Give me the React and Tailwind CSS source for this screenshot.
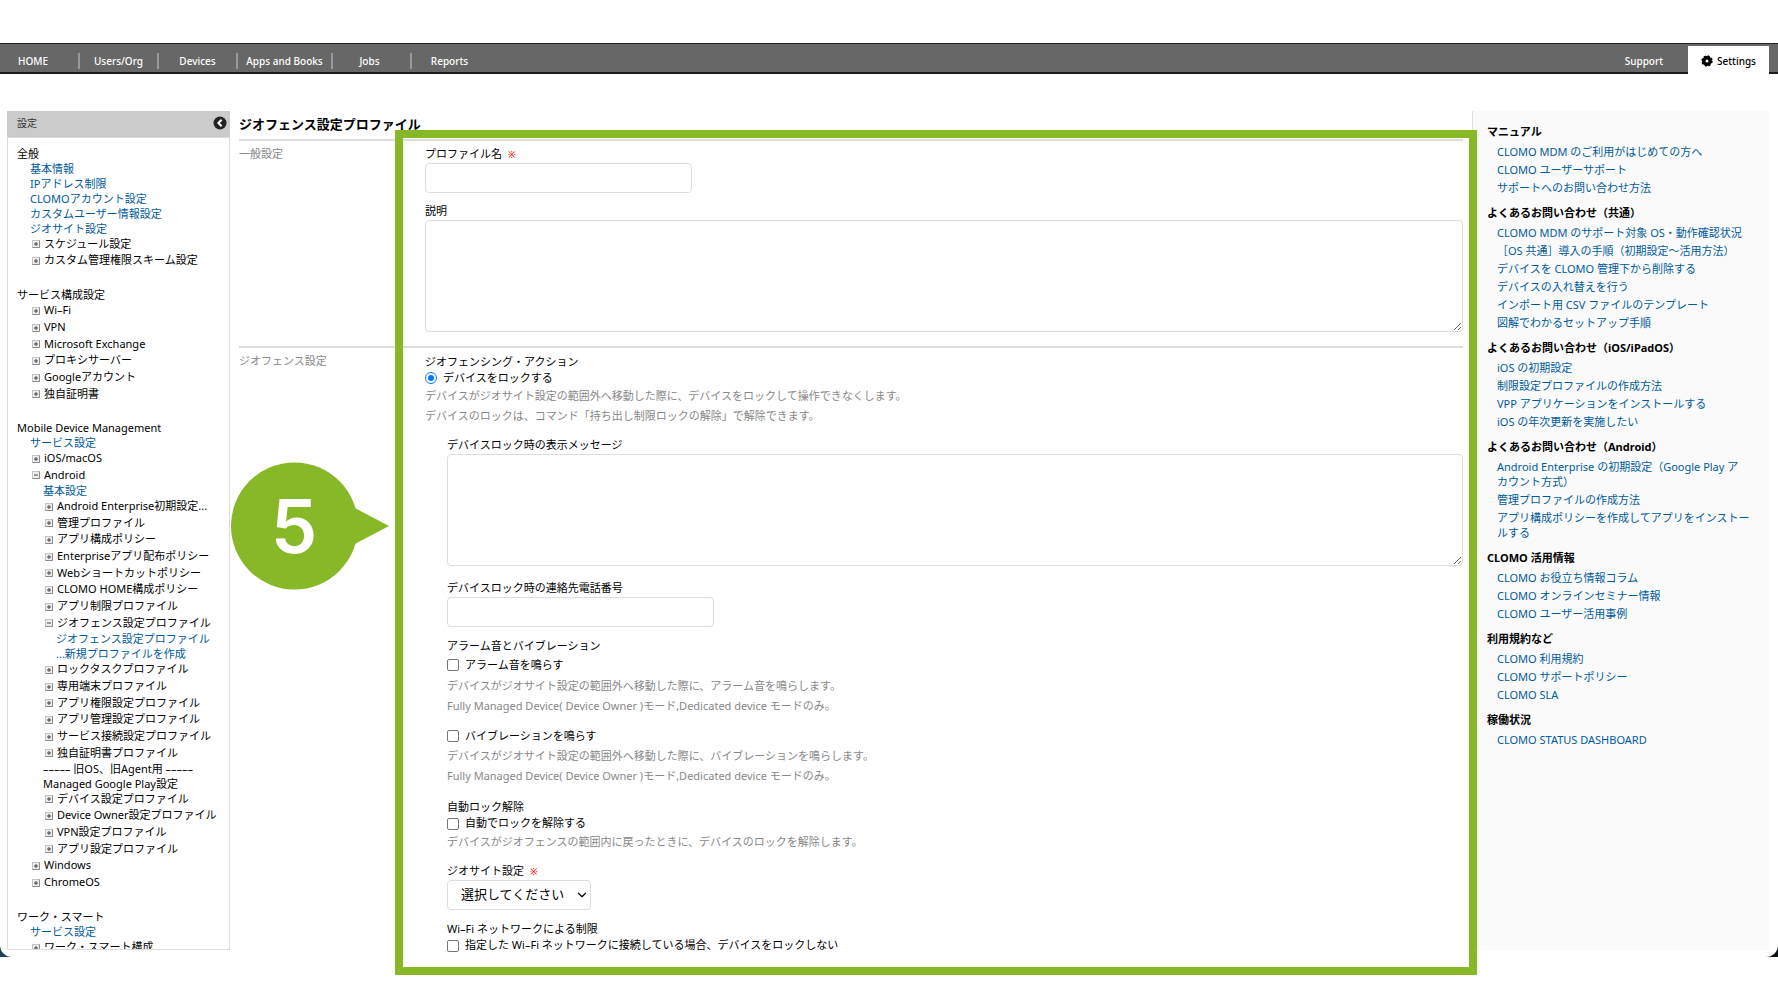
import React from "react";
import { ChevronDown } from "lucide-react";

const NAV_ITEMS = [
  { label: "HOME", className: "w-20 pr-3" },
  { label: "Users/Org", className: "w-[79px]" },
  { label: "Devices", className: "w-[79px]" },
  { label: "Apps and Books", className: "w-[95px]" },
  { label: "Jobs", className: "w-[79px] pr-1" },
  { label: "Reports", className: "w-[79px] pr-1" },
];

const SIDEBAR_GROUPS = [
  {
    title: "全般",
    items: [
      { link: "基本情報" },
      { link: "IPアドレス制限" },
      { link: "CLOMOアカウント設定" },
      { link: "カスタムユーザー情報設定" },
      { link: "ジオサイト設定" },
      { node: "スケジュール設定" },
      { node: "カスタム管理権限スキーム設定" },
    ],
  },
  {
    title: "サービス構成設定",
    items: [
      { node: "Wi–Fi" },
      { node: "VPN" },
      { node: "Microsoft Exchange" },
      { node: "プロキシサーバー" },
      { node: "Googleアカウント" },
      { node: "独自証明書" },
    ],
  },
  {
    title: "Mobile Device Management",
    items: [
      { link: "サービス設定" },
      { node: "iOS/macOS" },
      {
        node: "Android",
        children: [
          { link: "基本設定" },
          { node: "Android Enterprise初期設定..." },
          { node: "管理プロファイル" },
          { node: "アプリ構成ポリシー" },
          { node: "Enterpriseアプリ配布ポリシー" },
          { node: "Webショートカットポリシー" },
          { node: "CLOMO HOME構成ポリシー" },
          { node: "アプリ制限プロファイル" },
          {
            node: "ジオフェンス設定プロファイル",
            children: [{ link: "ジオフェンス設定プロファイル" }, { link: "...新規プロファイルを作成" }],
          },
          { node: "ロックタスクプロファイル" },
          { node: "専用端末プロファイル" },
          { node: "アプリ権限設定プロファイル" },
          { node: "アプリ管理設定プロファイル" },
          { node: "サービス接続設定プロファイル" },
          { node: "独自証明書プロファイル" },
          { text: "––––– 旧OS、旧Agent用 –––––" },
          { text: "Managed Google Play設定" },
          { node: "デバイス設定プロファイル" },
          { node: "Device Owner設定プロファイル" },
          { node: "VPN設定プロファイル" },
          { node: "アプリ設定プロファイル" },
        ],
      },
      { node: "Windows" },
      { node: "ChromeOS" },
    ],
  },
  {
    title: "ワーク・スマート",
    items: [{ link: "サービス設定" }, { node: "ワーク・スマート構成" }],
  },
];

const HELP_GROUPS = [
  {
    title: "マニュアル",
    links: ["CLOMO MDM のご利用がはじめての方へ", "CLOMO ユーザーサポート", "サポートへのお問い合わせ方法"],
  },
  {
    title: "よくあるお問い合わせ（共通）",
    links: [
      "CLOMO MDM のサポート対象 OS・動作確認状況",
      "［OS 共通］導入の手順（初期設定～活用方法）",
      "デバイスを CLOMO 管理下から削除する",
      "デバイスの入れ替えを行う",
      "インポート用 CSV ファイルのテンプレート",
      "図解でわかるセットアップ手順",
    ],
  },
  {
    title: "よくあるお問い合わせ（iOS/iPadOS）",
    links: [
      "iOS の初期設定",
      "制限設定プロファイルの作成方法",
      "VPP アプリケーションをインストールする",
      "iOS の年次更新を実施したい",
    ],
  },
  {
    title: "よくあるお問い合わせ（Android）",
    links: [
      "Android Enterprise の初期設定（Google Play ア\nカウント方式）",
      "管理プロファイルの作成方法",
      "アプリ構成ポリシーを作成してアプリをインストールする",
    ],
  },
  {
    title: "CLOMO 活用情報",
    links: ["CLOMO お役立ち情報コラム", "CLOMO オンラインセミナー情報", "CLOMO ユーザー活用事例"],
  },
  {
    title: "利用規約など",
    links: ["CLOMO 利用規約", "CLOMO サポートポリシー", "CLOMO SLA"],
  },
  { title: "稼働状況", links: ["CLOMO STATUS DASHBOARD"] },
];

function GearIcon() {
  return (
    <svg viewBox="0 0 12 12" className="size-3" aria-hidden="true">
      <circle cx="6" cy="6" r="3.2" fill="none" stroke="#000" strokeWidth="3.4" />
      <circle cx="6" cy="6" r="4.9" fill="none" stroke="#000" strokeWidth="1.6" strokeDasharray="2.1 1.748" />
    </svg>
  );
}

function TreeIcon({ open }) {
  return (
    <svg viewBox="0 0 8 8" className="size-2 shrink-0" aria-hidden="true">
      <rect x="0.5" y="0.5" width="7" height="7" fill="#ededed" stroke="#c4c4c4" />
      <path d="M7.5 0.5V7.5H0.5" fill="none" stroke="#8a8a8a" />
      <path d={open ? "M2 4H6" : "M2 4H6M4 2V6"} stroke="#444" />
    </svg>
  );
}

function TopNav() {
  return (
    <nav className="flex h-[31px] items-end justify-between border-t border-b-2 border-t-[#222] border-b-[#1a1a1a] bg-[#676767] pr-[9px] text-[10px] leading-4 font-medium text-white">
      <ul className="flex pb-[3px]">
        {NAV_ITEMS.map((item) => (
          <li key={item.label} className={`${item.className} border-r-2 border-[#999] text-center last:border-r-0`}>
            <a href="#">{item.label}</a>
          </li>
        ))}
      </ul>
      <div className="flex items-end">
        <a href="#" className="px-[25px] pb-[3px]">Support</a>
        <a href="#" className="-mb-0.5 flex h-7 w-[81px] items-center justify-center gap-1 bg-white pt-0.5 text-black">
          <GearIcon />
          Settings
        </a>
      </div>
    </nav>
  );
}

function TreeItems({ items }) {
  return (
    <ul>
      {items.map((item, index) => {
        if (item.link) {
          return (
            <li key={item.link} className="h-[15px] leading-[15px]">
              <a href="#" className="text-[#005a9c]">{item.link}</a>
            </li>
          );
        }
        if (item.text) {
          return <li key={item.text} className="h-[15px] leading-[15px]">{item.text}</li>;
        }
        return (
          <li key={item.node}>
            <div className={`flex items-center gap-1 pl-0.5 ${index % 3 === 2 ? "h-4" : "h-[17px]"}`}>
              <TreeIcon open={Boolean(item.children)} />
              {item.node}
            </div>
            {item.children && (
              <div className="pl-[13px]">
                <TreeItems items={item.children} />
              </div>
            )}
          </li>
        );
      })}
    </ul>
  );
}

function Sidebar() {
  return (
    <aside className="flex w-[223px] shrink-0 flex-col">
      <div className="flex h-[26px] shrink-0 items-center justify-between bg-[#cbcbcb] pr-[3px] pb-0.5 pl-2.5 text-[10px] text-[#333]">
        設定
        <button type="button" aria-label="閉じる">
          <svg viewBox="0 0 14 14" className="size-3.5">
            <circle cx="7" cy="7" r="6.5" fill="#222" />
            <path d="M8.6 3.8L5.4 7L8.6 10.2" fill="none" stroke="#fff" strokeWidth="2" />
          </svg>
        </button>
      </div>
      <div className="min-h-0 flex-1 space-y-[18px] overflow-hidden border border-[#ddd] pt-2 pl-[9px] whitespace-nowrap">
        {SIDEBAR_GROUPS.map((group) => (
          <section key={group.title}>
            <h2 className="h-[15px] leading-[15px]">{group.title}</h2>
            <div className="pl-[13px]">
              <TreeItems items={group.items} />
            </div>
          </section>
        ))}
      </div>
    </aside>
  );
}

function FieldLabel({ htmlFor, required, children }) {
  return (
    <label htmlFor={htmlFor} className="flex h-[17px] items-center gap-1.5">
      {children}
      {required && <span className="text-[9px] font-medium text-[#f00]">※</span>}
    </label>
  );
}

function Check({ id, className = "h-[17px]", children }) {
  return (
    <div className={`flex items-center gap-1.5 ${className}`}>
      <input
        id={id}
        type="checkbox"
        className="size-3 appearance-none rounded-xs border border-[#767676] bg-white checked:bg-[#0075ff]"
      />
      <label htmlFor={id}>{children}</label>
    </div>
  );
}

function Help({ children }) {
  return <p className="leading-5 text-[#888]">{children}</p>;
}

function FormSection({ title, children }) {
  return (
    <section className="flex border-t-2 border-[#ddd] pt-[5px]">
      <h2 className="w-[186px] shrink-0 leading-4 text-[#888]">{title}</h2>
      <div className="min-w-0 flex-1">{children}</div>
    </section>
  );
}

function ProfileForm() {
  return (
    <main className="relative ml-[9px] min-w-0 flex-1">
      <h1 className="pb-0.5 text-[13px] leading-[26px] font-bold">ジオフェンス設定プロファイル</h1>
      <form>
        <FormSection title="一般設定">
          <FieldLabel htmlFor="name" required>プロファイル名</FieldLabel>
          <input id="name" type="text" className="block h-[30px] w-[267px] rounded border border-[#ddd] px-2" />
          <div className="mt-2.5">
            <FieldLabel htmlFor="description">説明</FieldLabel>
          </div>
          <textarea id="description" className="mb-3.5 block h-28 w-full rounded border border-[#ddd] p-2" />
        </FormSection>

        <FormSection title="ジオフェンス設定">
          <h3 className="leading-[17px]">ジオフェンシング・アクション</h3>
          <div className="flex h-4 items-center gap-1.5">
            <input
              id="lock"
              type="radio"
              name="action"
              defaultChecked
              className="size-3 appearance-none rounded-full border border-[#0075ff] p-0.5 checked:bg-[#0075ff] checked:bg-clip-content"
            />
            <label htmlFor="lock">デバイスをロックする</label>
          </div>
          <Help>デバイスがジオサイト設定の範囲外へ移動した際に、デバイスをロックして操作できなくします。</Help>
          <Help>デバイスのロックは、コマンド「持ち出し制限ロックの解除」で解除できます。</Help>

          <div className="pt-[11px] pl-[22px]">
            <FieldLabel htmlFor="message">デバイスロック時の表示メッセージ</FieldLabel>
            <textarea id="message" className="mb-3.5 block h-28 w-full rounded border border-[#ddd] p-2" />
            <FieldLabel htmlFor="phone">デバイスロック時の連絡先電話番号</FieldLabel>
            <input id="phone" type="tel" className="mb-2.5 block h-[30px] w-[267px] rounded border border-[#ddd] px-2" />

            <h3 className="leading-[17px]">アラーム音とバイブレーション</h3>
            <div className="mb-2.5">
              <Check id="alarm" className="h-[22px]">アラーム音を鳴らす</Check>
              <Help>デバイスがジオサイト設定の範囲外へ移動した際に、アラーム音を鳴らします。</Help>
              <Help>Fully Managed Device( Device Owner )モード,Dedicated device モードのみ。</Help>
            </div>
            <div className="mb-3">
              <Check id="vibration" className="h-5">バイブレーションを鳴らす</Check>
              <Help>デバイスがジオサイト設定の範囲外へ移動した際に、バイブレーションを鳴らします。</Help>
              <Help>Fully Managed Device( Device Owner )モード,Dedicated device モードのみ。</Help>
            </div>

            <h3 className="leading-[17px]">自動ロック解除</h3>
            <div className="mb-[11px]">
              <Check id="unlock">自動でロックを解除する</Check>
              <Help>デバイスがジオフェンスの範囲内に戻ったときに、デバイスのロックを解除します。</Help>
            </div>

            <FieldLabel htmlFor="site" required>ジオサイト設定</FieldLabel>
            <div className="relative mb-2.5 w-36">
              <select id="site" className="block h-[30px] w-full appearance-none rounded border border-[#ddd] bg-white pl-[13px] text-[13px]">
                <option>選択してください</option>
              </select>
              <ChevronDown className="pointer-events-none absolute top-2 right-0.5 size-3.5" />
            </div>

            <h3 className="leading-[17px]">Wi–Fi ネットワークによる制限</h3>
            <Check id="wifi">指定した Wi–Fi ネットワークに接続している場合、デバイスをロックしない</Check>
          </div>
        </FormSection>
      </form>

      {/* highlight frame and step marker drawn over the form */}
      <div className="pointer-events-none absolute top-[19px] -right-3.5 -bottom-[25px] left-[156px] border-8 border-[#86b827]" />
      <div className="pointer-events-none absolute top-[351px] -left-2 flex size-32 items-center justify-center">
        <svg viewBox="0 0 160 128" className="absolute top-0 left-0 h-32 w-40" aria-hidden="true">
          <circle cx="63.5" cy="64" r="63.5" fill="#86b827" />
          <path d="M120 44L158 64L120 84Z" fill="#86b827" />
        </svg>
        <span className="relative pr-0.5 font-[Inter,sans-serif] text-[74px] font-semibold text-white">5</span>
      </div>
    </main>
  );
}

function HelpPanel() {
  return (
    <aside className="ml-[9px] w-[297px] shrink-0 space-y-2.5 border-l border-[#ddd] bg-[#fafafa] pt-[13px] pr-4 pl-3.5">
      {HELP_GROUPS.map((group) => (
        <section key={group.title}>
          <h2 className="leading-4 font-bold">{group.title}</h2>
          <ul className="space-y-[3px] pt-1 pl-2.5 leading-[15px]">
            {group.links.map((link) => (
              <li key={link}>
                <a href="#" className="block whitespace-pre-line text-[#005a9c]">{link}</a>
              </li>
            ))}
          </ul>
        </section>
      ))}
    </aside>
  );
}

export default function App() {
  return (
    <div className="h-screen overflow-hidden bg-white py-[43px] font-['Noto_Sans','Noto_Sans_CJK_JP',sans-serif] text-[11px] text-black">
      <div className="h-full bg-linear-to-r from-[#1b414e] to-[#0b1214]">
        <div className="flex h-full flex-col rounded-b-xl bg-white">
          <TopNav />
          <div className="flex min-h-0 flex-1 pt-[37px] pr-[9px] pb-[7px] pl-[7px]">
            <Sidebar />
            <ProfileForm />
            <HelpPanel />
          </div>
        </div>
      </div>
    </div>
  );
}
